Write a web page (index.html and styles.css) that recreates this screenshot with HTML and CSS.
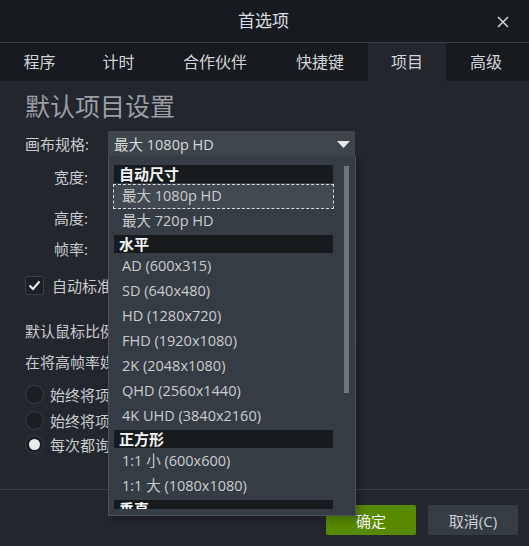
FILE: index.html
```html
<!DOCTYPE html>
<html lang="zh">
<head>
<meta charset="utf-8">
<title>首选项</title>
<link rel="stylesheet" href="styles.css">
</head>
<body>
<div class="dialog">
  <header class="titlebar">
    <span class="title">首选项</span>
    <svg class="close" width="12" height="12" viewBox="0 0 12 12"><path d="M1 1L11 11M11 1L1 11" stroke="#d4d6d8" stroke-width="1.5" fill="none"/></svg>
  </header>
  <nav class="tabs">
    <div class="tab">程序</div>
    <div class="tab">计时</div>
    <div class="tab">合作伙伴</div>
    <div class="tab">快捷键</div>
    <div class="tab active">项目</div>
    <div class="tab">高级</div>
  </nav>
  <main class="content">
    <h1 class="heading">默认项目设置</h1>
    <div class="row row-canvas">
      <span class="label">画布规格:</span>
      <div class="select">
        <span>最大 1080p HD</span>
        <svg class="arrow" width="13" height="7" viewBox="0 0 13 7"><path d="M0 0H13L6.5 7Z" fill="#e6e8ea"/></svg>
      </div>
    </div>
    <div class="row row-w"><span class="sublabel">宽度:</span></div>
    <div class="row row-h"><span class="sublabel">高度:</span></div>
    <div class="row row-f"><span class="sublabel">帧率:</span></div>
    <div class="row row-check">
      <span class="checkbox"><svg width="13" height="11" viewBox="0 0 13 11"><path d="M1.5 5.5L5 9L11.5 1.5" stroke="#f0f0f0" stroke-width="2" fill="none"/></svg></span>
      <span class="text">自动标准化画布尺寸</span>
    </div>
    <div class="row row-mouse">
      <span class="text">默认鼠标比例缩放:</span>
      <div class="select-dim"></div>
    </div>
    <div class="row row-fps"><span class="text">在将高帧率媒体添加到项目时:</span></div>
    <div class="row radio-row r1"><span class="radio"></span><span class="text">始终将项目帧率设置为媒体帧率</span></div>
    <div class="row radio-row r2"><span class="radio"></span><span class="text">始终将项目帧率保持不变</span></div>
    <div class="row radio-row r3"><span class="radio checked"></span><span class="text">每次都询问</span></div>

    <div class="dropdown">
      <div class="list">
        <div class="group">自动尺寸</div>
        <div class="item focused">最大 1080p HD</div>
        <div class="item">最大 720p HD</div>
        <div class="group">水平</div>
        <div class="item">AD (600x315)</div>
        <div class="item">SD (640x480)</div>
        <div class="item">HD (1280x720)</div>
        <div class="item">FHD (1920x1080)</div>
        <div class="item">2K (2048x1080)</div>
        <div class="item">QHD (2560x1440)</div>
        <div class="item">4K UHD (3840x2160)</div>
        <div class="group">正方形</div>
        <div class="item">1:1 小 (600x600)</div>
        <div class="item">1:1 大 (1080x1080)</div>
        <div class="group">垂直</div>
        <div class="item">9:16 (1080x1920)</div>
      </div>
      <div class="scrollbar"></div>
    </div>
  </main>
  <footer class="footer">
    <button class="btn ok">确定</button>
    <button class="btn cancel">取消(C)</button>
  </footer>
</div>
</body>
</html>
```
FILE: styles.css
```css
* { box-sizing: border-box; }
html, body { margin: 0; padding: 0; }
body {
  width: 529px;
  height: 546px;
  background: #23262d;
  font-family: "Open Sans", "Noto Sans CJK SC", sans-serif;
  overflow: hidden;
}
.dialog {
  width: 529px;
  height: 546px;
  display: flex;
  flex-direction: column;
  position: relative;
}
.titlebar {
  height: 42px;
  background: #171a1e;
  display: flex;
  align-items: center;
  justify-content: center;
  position: relative;
}
.title {
  color: #dcdde0;
  font-size: 17px;
  line-height: 42px;
  margin-left: -2px;
}
.close {
  position: absolute;
  right: 20px;
  top: 16px;
}
.tabs {
  height: 39px;
  border-top: 1px solid #3a3d43;
  background: #171a1e;
  display: flex;
}
.tab {
  flex: none;
  padding: 0 23.5px;
  font-size: 16px;
  line-height: 38px;
  color: #d2d4d7;
}
.tab:nth-child(3) { padding: 0 25px; }
.tab:nth-child(4) { padding: 0 24px; }
.tab.active { background: #23262d; padding: 0 23px; }
.tab:last-child { padding: 0 24px; }

.content {
  flex: 1;
  position: relative;
  padding: 0 25px;
  display: flex;
  flex-direction: column;
}
.heading {
  margin: 9px 0 0;
  height: 32px;
  line-height: 32px;
  font-size: 25px;
  font-weight: normal;
  color: #9b9fa5;
}
.row {
  display: flex;
  align-items: center;
  font-size: 15px;
  color: #c9cbce;
}
.label { width: 83px; }
.row-canvas { margin-top: 9px; height: 25px; }
.select {
  width: 247px;
  height: 25px;
  background: #3e464c;
  border-radius: 2px 2px 0 0;
  display: flex;
  align-items: center;
  justify-content: space-between;
  padding: 0 5px 0 6px;
  font-size: 14.5px;
  color: #d6d8da;
}
.arrow { margin-top: 1px; }
.sublabel { margin-left: 29px; }
.row-w { margin-top: 8px; height: 24px; }
.row-h { margin-top: 17px; height: 24px; }
.row-f { margin-top: 7px; height: 24px; }
.row-check { margin-top: 16px; height: 19px; }
.checkbox {
  width: 19px;
  height: 19px;
  border: 1px solid #3c4147;
  border-radius: 2px;
  background: #1c1f23;
  display: flex;
  align-items: center;
  justify-content: center;
  margin-right: 8px;
}
.row-mouse { margin-top: 23px; height: 25px; justify-content: space-between; width: 332px; }
.select-dim {
  width: 120px;
  height: 24px;
  background: #2c3137;
  border-radius: 2px;
}
.row-fps { margin-top: 6px; height: 25px; }
.radio-row { height: 19px; }
.r1 { margin-top: 11px; }
.r2 { margin-top: 7px; }
.r3 { margin-top: 5px; }
.radio {
  width: 19px;
  height: 19px;
  border-radius: 50%;
  border: 1.5px solid #3a3f45;
  background: #1b1e22;
  margin-right: 6px;
  display: flex;
  align-items: center;
  justify-content: center;
}
.radio.checked::after {
  content: "";
  width: 11px;
  height: 11px;
  border-radius: 50%;
  background: #e9eaec;
}
.text { white-space: nowrap; }

.dropdown {
  position: absolute;
  left: 108px;
  top: 75px;
  width: 248px;
  height: 360px;
  background: #363c43;
  border: 1px solid #4a5157;
  border-top: none;
  box-shadow: 4px 4px 8px rgba(0, 0, 0, 0.25);
  padding: 9px 0 0 4px;
}
.list {
  width: 222px;
  height: 344px;
  overflow: hidden;
  display: flex;
  flex-direction: column;
}
.group {
  flex: none;
  height: 18px;
  margin: 1px 0 1px 1px;
  width: 219px;
  background: #171b1e;
  color: #f2f3f4;
  font-weight: bold;
  font-size: 15px;
  line-height: 18px;
  padding-left: 5px;
}
.group:first-child { margin-top: 0; }
.item {
  flex: none;
  height: 25px;
  width: 221px;
  line-height: 24px;
  padding-left: 9px;
  font-size: 14.5px;
  color: #c9ccce;
}
.item.focused {
  background: #424950;
  border: 1px dashed #dcdcdc;
  padding-left: 8px;
  line-height: 22px;
}
.scrollbar {
  position: absolute;
  left: 235px;
  top: 10px;
  width: 5px;
  height: 227px;
  background: #6e757b;
}

.footer {
  height: 57px;
  border-top: 1px solid #3a3e44;
  display: flex;
  justify-content: flex-end;
  align-items: flex-start;
  padding: 15px 11px 0 0;
  gap: 12px;
}
.btn {
  width: 90px;
  height: 30px;
  border: none;
  border-radius: 2px;
  font-family: "Open Sans", "Noto Sans CJK SC", sans-serif;
  font-size: 15px;
  padding: 0;
}
.ok { background: #578a00; color: #f4f6f0; }
.cancel { background: #363c43; color: #cdd0d3; }
```
